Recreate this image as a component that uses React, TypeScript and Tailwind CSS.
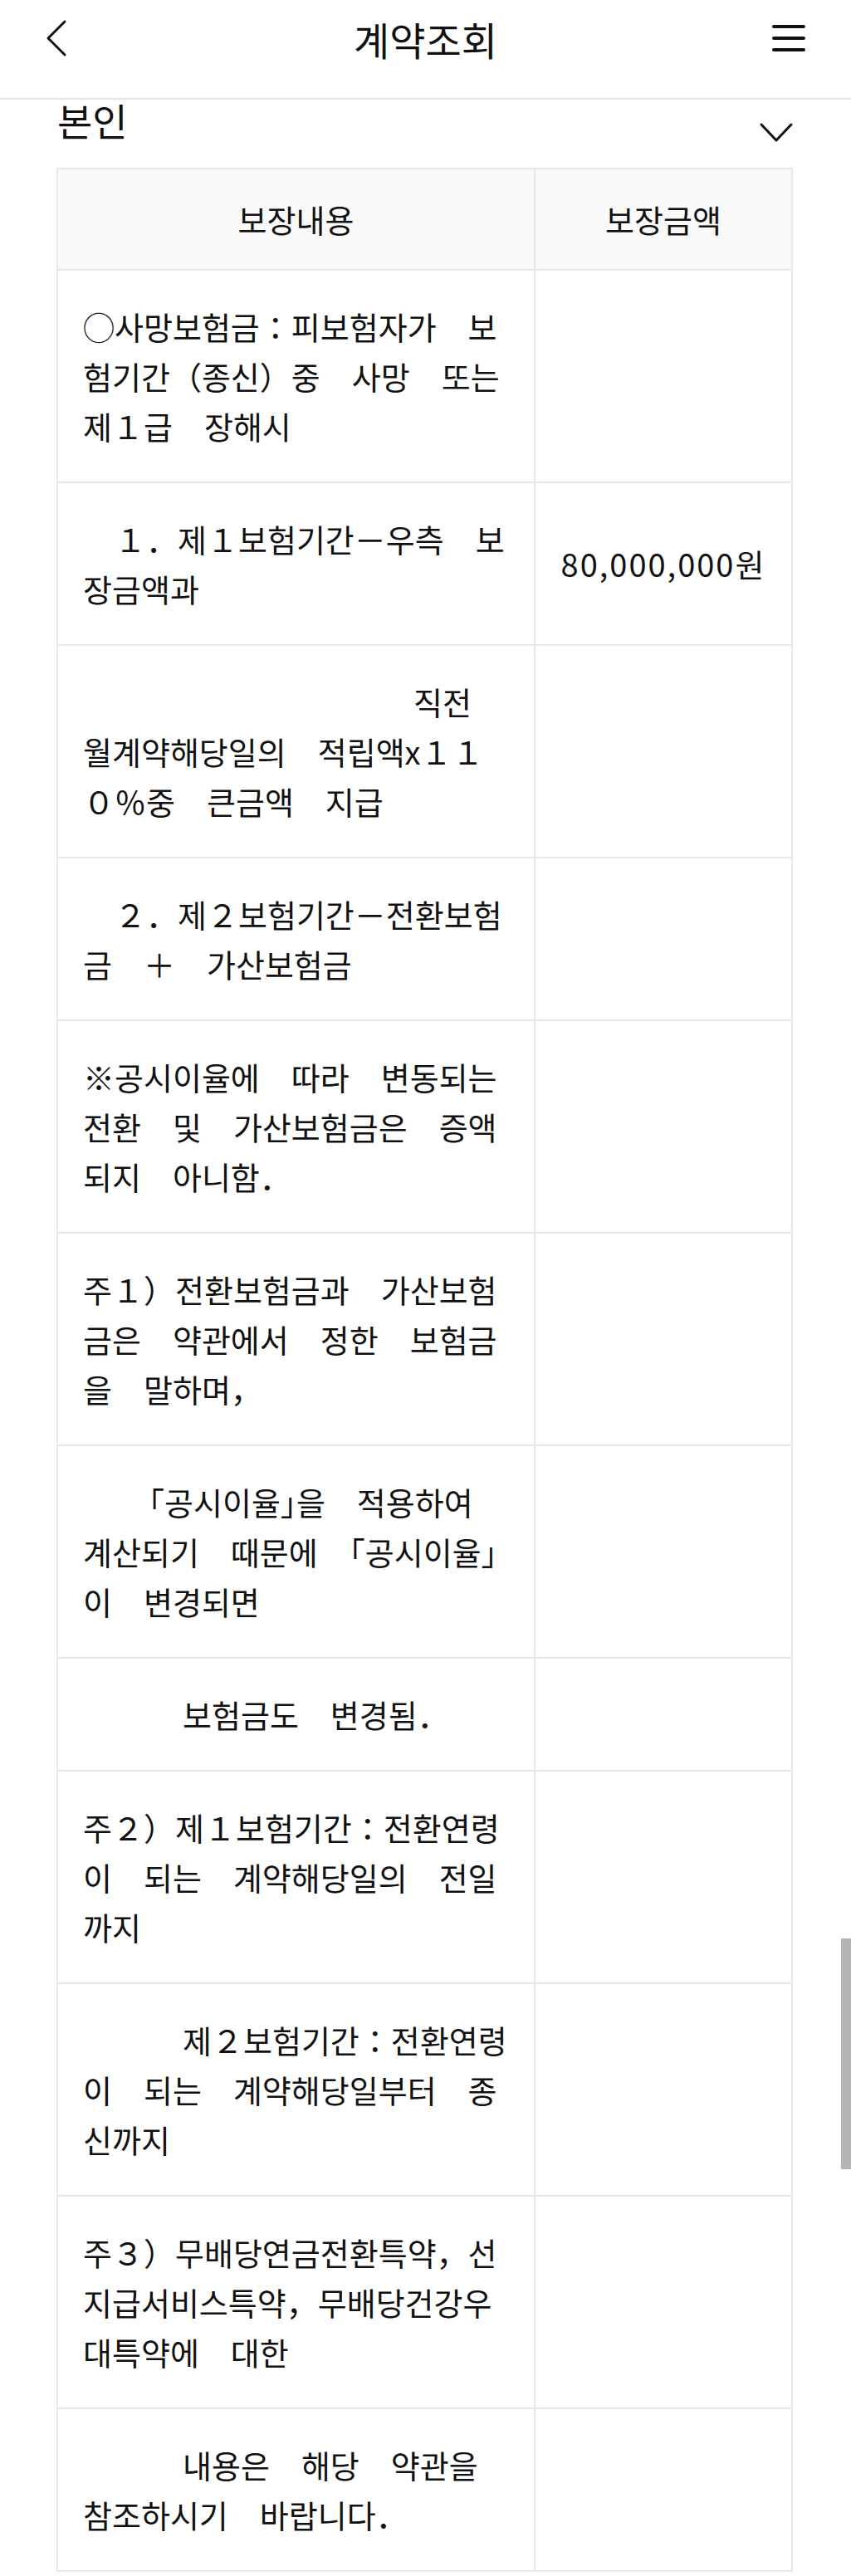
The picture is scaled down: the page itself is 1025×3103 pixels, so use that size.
import React from 'react'

type Line = { t: string; ind?: string }
type Row = { lines: Line[]; amount?: string }

const rows: Row[] = [
  { lines: [{ t: '◯사망보험금：피보험자가　보' }, { t: '험기간（종신）중　사망　또는' }, { t: '제１급　장해시' }] },
  { lines: [{ t: '　１．제１보험기간－우측　보' }, { t: '장금액과' }], amount: '80,000,000원' },
  { lines: [{ t: '직전', ind: 'pl-[398px]' }, { t: '월계약해당일의　적립액x１１' }, { t: '０％중　큰금액　지급' }] },
  { lines: [{ t: '　２．제２보험기간－전환보험' }, { t: '금　＋　가산보험금' }] },
  { lines: [{ t: '※공시이율에　따라　변동되는' }, { t: '전환　및　가산보험금은　증액' }, { t: '되지　아니함．' }] },
  { lines: [{ t: '주１）전환보험금과　가산보험' }, { t: '금은　약관에서　정한　보험금' }, { t: '을　말하며，' }] },
  { lines: [{ t: '「공시이율」을　적용하여', ind: 'pl-[79px]' }, { t: '계산되기　때문에　「공시이율」' }, { t: '이　변경되면' }] },
  { lines: [{ t: '보험금도　변경됨．', ind: 'pl-[120px]' }] },
  { lines: [{ t: '주２）제１보험기간：전환연령' }, { t: '이　되는　계약해당일의　전일' }, { t: '까지' }] },
  { lines: [{ t: '제２보험기간：전환연령', ind: 'pl-[120px]' }, { t: '이　되는　계약해당일부터　종' }, { t: '신까지' }] },
  { lines: [{ t: '주３）무배당연금전환특약，선' }, { t: '지급서비스특약，무배당건강우' }, { t: '대특약에　대한' }] },
  { lines: [{ t: '내용은　해당　약관을', ind: 'pl-[120px]' }, { t: '참조하시기　바랍니다．' }] },
]

// corner brackets are half width in the original font
function fmt(t: string) {
  return t.split(/([「」])/).map((p, i) =>
    p === '「' || p === '」' ? (
      <span key={i} className="[font-feature-settings:'halt']">
        {p}
      </span>
    ) : (
      p
    )
  )
}

export default function App() {
  return (
    <div className="relative min-h-[3103px] bg-white font-['Noto_Sans_CJK_KR',sans-serif] font-normal text-[#111]">
      <header className="h-[120px] border-b-2 border-[#e6e6e6]">
        <div className="grid h-[92px] grid-cols-[1fr_auto_1fr] items-center px-[55px]">
          <svg width="26" height="46" viewBox="0 0 26 46" fill="none">
            <path d="M23 3 L3 23 L23 43" stroke="#111" strokeWidth="3" strokeLinecap="round" strokeLinejoin="round" />
          </svg>
          <h1 className="text-[47px] leading-none font-normal">계약조회</h1>
          <div className="flex justify-end">
            <div className="flex w-[40px] flex-col gap-[10px]">
              <span className="h-[4px] rounded-full bg-[#111]" />
              <span className="h-[4px] rounded-full bg-[#111]" />
              <span className="h-[4px] rounded-full bg-[#111]" />
            </div>
          </div>
        </div>
      </header>

      <div className="ml-[68px] flex w-[887px] items-start justify-between">
        <span className="pl-[1px] text-[46px] leading-[48px]">본인</span>
        <svg className="mt-[28px]" width="40" height="24" viewBox="0 0 40 24" fill="none">
          <path d="M2 2 L20 21 L38 2" stroke="#111" strokeWidth="3" strokeLinecap="round" strokeLinejoin="round" />
        </svg>
      </div>

      <div className="mt-[30px] ml-[68px] w-[887px] border-x-2 border-t-2 border-[#e8e8e8] text-[38px] leading-[60px]">
        <div className="grid grid-cols-[575px_1fr] border-b-2 border-[#e8e8e8] bg-[#f9f9f9]">
          <div className="border-r-2 border-[#e8e8e8] py-[30px] text-center">보장내용</div>
          <div className="py-[30px] text-center">보장금액</div>
        </div>
        {rows.map((r, i) => (
          <div key={i} className="grid grid-cols-[575px_1fr] border-b-2 border-[#e8e8e8]">
            <div className="border-r-2 border-[#e8e8e8] py-[37px] pl-[30px]">
              {r.lines.map((l, j) => (
                <div key={j} className={'whitespace-pre ' + (l.ind ?? '')}>
                  {fmt(l.t)}
                </div>
              ))}
            </div>
            <div className="flex items-center justify-center tracking-[2px]">{r.amount}</div>
          </div>
        ))}
      </div>

      <div className="absolute top-[2335px] right-0 h-[278px] w-[12px] bg-[#b5b5b5]" />
    </div>
  )
}
